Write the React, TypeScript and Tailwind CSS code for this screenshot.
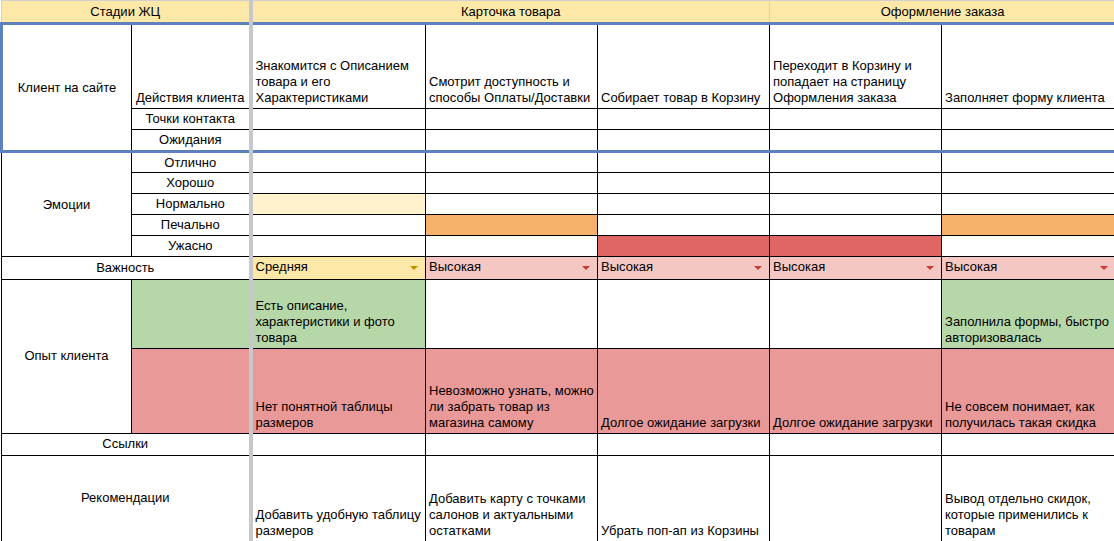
import React from "react";

const B = "border border-black";
const cellC = "border-l-[4px] border-l-[#c6c8cc]";

function Arrow({ color }: { color: string }) {
  return <span className="absolute right-[7px] top-[9px] w-0 h-0 border-l-[4px] border-r-[4px] border-t-[4px] border-l-transparent border-r-transparent" style={{ borderTopColor: color }} />;
}

function Imp({ v, bg, ac, first }: { v: string; bg: string; ac: string; first?: boolean }) {
  return (
    <td className={`${B} ${first ? cellC : ""} relative align-bottom px-[3px] pb-[2px]`} style={{ background: bg }}>
      {v}
      <Arrow color={ac} />
    </td>
  );
}

export default function App() {
  const td = `${B} align-bottom px-[3px] pb-[2px] leading-[16px]`;
  const lbl = `${B} text-center align-middle`;
  const emo = [
    ["Отлично", [null, null, null, null, null]],
    ["Хорошо", [null, null, null, null, null]],
    ["Нормально", ["#fff2cc", null, null, null, null]],
    ["Печально", [null, "#f6b26b", null, null, "#f6b26b"]],
    ["Ужасно", [null, null, "#e06666", "#e06666", null]],
  ] as const;
  return (
    <div className="w-[1114px] h-[541px] overflow-hidden bg-white text-[13px] text-black" style={{ fontFamily: '"Liberation Sans", Arial, sans-serif' }}>
      <table className="border-collapse table-fixed w-[1114px]">
        <colgroup>
          <col className="w-[130px]" />
          <col className="w-[119px]" />
          <col className="w-[175px]" />
          <col className="w-[172px]" />
          <col className="w-[172px]" />
          <col className="w-[172px]" />
          <col className="w-[174px]" />
        </colgroup>
        <tbody>
          <tr className="h-[23px] bg-[#fde8a8] border-b-[3px] border-b-[#5b82bf]">
            <td colSpan={2} className="border border-[#d0d0d0] border-b-[3px] border-b-[#5b82bf] text-center">Стадии ЖЦ</td>
            <td colSpan={3} className={`border border-[#d0d0d0] border-b-[3px] border-b-[#5b82bf] ${cellC} text-center`}>Карточка товара</td>
            <td colSpan={2} className="border border-[#d0d0d0] border-b-[3px] border-b-[#5b82bf] text-center">Оформление заказа</td>
          </tr>
          <tr className="h-[85px]">
            <td rowSpan={3} className={`${lbl} border-l-[3px] border-l-[#5b82bf] border-b-[3px] border-b-[#5b82bf]`}>Клиент на сайте</td>
            <td className={`${td} text-center`}>Действия клиента</td>
            <td className={`${td} ${cellC}`}>Знакомится с Описанием товара и его Характеристиками</td>
            <td className={td}>Смотрит доступность и способы Оплаты/Доставки</td>
            <td className={td}>Собирает товар в Корзину</td>
            <td className={td}>Переходит в Корзину и попадает на страницу Оформления заказа</td>
            <td className={td}>Заполняет форму клиента</td>
          </tr>
          <tr className="h-[21px]">
            <td className={lbl}>Точки контакта</td>
            <td className={`${B} ${cellC}`} /><td className={B} /><td className={B} /><td className={B} /><td className={B} />
          </tr>
          <tr className="h-[21px] border-b-[3px] border-b-[#5b82bf]">
            <td className={`${lbl} border-b-[3px] border-b-[#5b82bf]`}>Ожидания</td>
            {[0, 1, 2, 3, 4].map((i) => (
              <td key={i} className={`${B} border-b-[3px] border-b-[#5b82bf] ${i === 0 ? cellC : ""}`} />
            ))}
          </tr>
          {emo.map(([name, cols], ri) => (
            <tr key={name} className="h-[21px]">
              {ri === 0 && <td rowSpan={5} className={lbl}>Эмоции</td>}
              <td className={lbl}>{name}</td>
              {cols.map((c, i) => (
                <td key={i} className={`${B} ${i === 0 ? cellC : ""}`} style={{ background: c ?? undefined }} />
              ))}
            </tr>
          ))}
          <tr className="h-[21px]">
            <td colSpan={2} className={lbl}>Важность</td>
            <Imp v="Средняя" bg="#fde8a8" ac="#bf9000" first />
            <Imp v="Высокая" bg="#f4c7c3" ac="#cc3b33" />
            <Imp v="Высокая" bg="#f4c7c3" ac="#cc3b33" />
            <Imp v="Высокая" bg="#f4c7c3" ac="#cc3b33" />
            <Imp v="Высокая" bg="#f4c7c3" ac="#cc3b33" />
          </tr>
          <tr className="h-[69px]">
            <td rowSpan={2} className={lbl}>Опыт клиента</td>
            <td className={`${B} bg-[#b6d7a8]`} />
            <td className={`${td} ${cellC} bg-[#b6d7a8]`}>Есть описание, характеристики и фото товара</td>
            <td className={B} /><td className={B} /><td className={B} />
            <td className={`${td} bg-[#b6d7a8]`}>Заполнила формы, быстро авторизовалась</td>
          </tr>
          <tr className="h-[85px] bg-[#ea9999]">
            <td className={B} />
            <td className={`${td} ${cellC}`}>Нет понятной таблицы размеров</td>
            <td className={td}>Невозможно узнать, можно ли забрать товар из магазина самому</td>
            <td className={td}>Долгое ожидание загрузки</td>
            <td className={td}>Долгое ожидание загрузки</td>
            <td className={td}>Не совсем понимает, как получилась такая скидка</td>
          </tr>
          <tr className="h-[22px]">
            <td colSpan={2} className={lbl}>Ссылки</td>
            <td className={`${B} ${cellC}`} /><td className={B} /><td className={B} /><td className={B} /><td className={B} />
          </tr>
          <tr className="h-[86px]">
            <td colSpan={2} className={lbl}>Рекомендации</td>
            <td className={`${td} ${cellC}`}>Добавить удобную таблицу размеров</td>
            <td className={td}>Добавить карту с точками салонов и актуальными остатками</td>
            <td className={td}>Убрать поп-ап из Корзины</td>
            <td className={td} />
            <td className={td}>Вывод отдельно скидок, которые применились к товарам</td>
          </tr>
        </tbody>
      </table>
    </div>
  );
}
